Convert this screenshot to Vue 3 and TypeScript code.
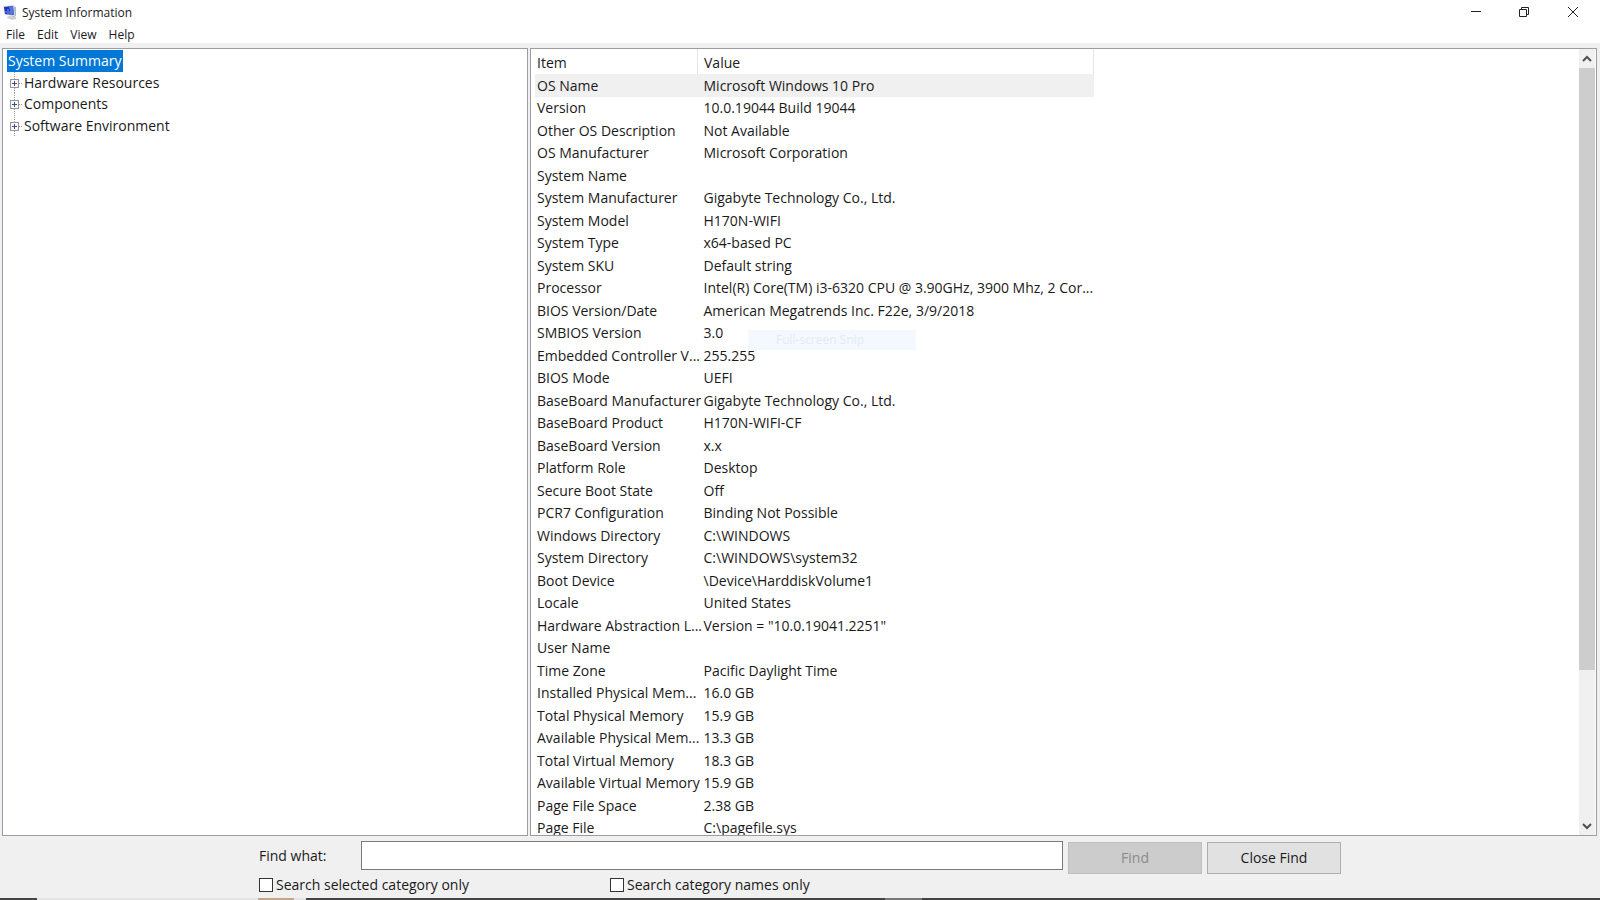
<script setup lang="ts">
import { ref } from 'vue'

interface Entry {
  item: string
  value: string
}

const menus: string[] = ['File', 'Edit', 'View', 'Help']
const categories: string[] = ['Hardware Resources', 'Components', 'Software Environment']

const entries: Entry[] = [
  { item: 'OS Name', value: 'Microsoft Windows 10 Pro' },
  { item: 'Version', value: '10.0.19044 Build 19044' },
  { item: 'Other OS Description', value: 'Not Available' },
  { item: 'OS Manufacturer', value: 'Microsoft Corporation' },
  { item: 'System Name', value: '' },
  { item: 'System Manufacturer', value: 'Gigabyte Technology Co., Ltd.' },
  { item: 'System Model', value: 'H170N-WIFI' },
  { item: 'System Type', value: 'x64-based PC' },
  { item: 'System SKU', value: 'Default string' },
  { item: 'Processor', value: 'Intel(R) Core(TM) i3-6320 CPU @ 3.90GHz, 3900 Mhz, 2 Cor...' },
  { item: 'BIOS Version/Date', value: 'American Megatrends Inc. F22e, 3/9/2018' },
  { item: 'SMBIOS Version', value: '3.0' },
  { item: 'Embedded Controller V...', value: '255.255' },
  { item: 'BIOS Mode', value: 'UEFI' },
  { item: 'BaseBoard Manufacturer', value: 'Gigabyte Technology Co., Ltd.' },
  { item: 'BaseBoard Product', value: 'H170N-WIFI-CF' },
  { item: 'BaseBoard Version', value: 'x.x' },
  { item: 'Platform Role', value: 'Desktop' },
  { item: 'Secure Boot State', value: 'Off' },
  { item: 'PCR7 Configuration', value: 'Binding Not Possible' },
  { item: 'Windows Directory', value: 'C:\\WINDOWS' },
  { item: 'System Directory', value: 'C:\\WINDOWS\\system32' },
  { item: 'Boot Device', value: '\\Device\\HarddiskVolume1' },
  { item: 'Locale', value: 'United States' },
  { item: 'Hardware Abstraction L...', value: 'Version = "10.0.19041.2251"' },
  { item: 'User Name', value: '' },
  { item: 'Time Zone', value: 'Pacific Daylight Time' },
  { item: 'Installed Physical Mem...', value: '16.0 GB' },
  { item: 'Total Physical Memory', value: '15.9 GB' },
  { item: 'Available Physical Mem...', value: '13.3 GB' },
  { item: 'Total Virtual Memory', value: '18.3 GB' },
  { item: 'Available Virtual Memory', value: '15.9 GB' },
  { item: 'Page File Space', value: '2.38 GB' },
  { item: 'Page File', value: 'C:\\pagefile.sys' },
]

const query = ref('')
const selectedOnly = ref(false)
const namesOnly = ref(false)
</script>

<template>
  <div class="window">
    <header class="titlebar">
      <svg class="app-icon" viewBox="0 0 16 16" aria-hidden="true">
        <path d="M5 13l5-2 4 2v2l-4 1-5-2z" fill="#cdd0d3" />
        <path d="M11 2l3 1v9l-3 1z" fill="#aeb6c6" />
        <path d="M1 2l11-1 1 11-10-1z" fill="#d5daea" />
        <path d="M2 3l9-1 1 9-9-1z" fill="#1d35b0" />
        <path d="M7 3l4-1 1 9-3-1z" fill="#5675dc" />
        <path d="M4 9V7m2 3V5m2 5V7" stroke="#7f9df0" fill="none" />
      </svg>
      <h1 class="title">System Information</h1>
      <div class="controls">
        <button type="button" aria-label="Minimize">
          <svg viewBox="0 0 12 12"><path d="M1 5.500h10" /></svg>
        </button>
        <button type="button" aria-label="Restore">
          <svg viewBox="0 0 12 12">
            <path d="M1.500 3.500h7v7h-7z" />
            <path d="M3.500 3v-1.500h7v7H9" />
          </svg>
        </button>
        <button type="button" aria-label="Close">
          <svg viewBox="0 0 12 12"><path d="M1 1l10 10M11 1 1 11" /></svg>
        </button>
      </div>
    </header>

    <nav class="menubar">
      <button v-for="menu in menus" :key="menu" type="button">{{ menu }}</button>
    </nav>

    <main class="panes">
      <section class="pane tree">
        <button type="button" class="root">System Summary</button>
        <ul>
          <li v-for="category in categories" :key="category">
            <svg class="expander" viewBox="0 0 17 22" aria-hidden="true">
              <path d="M7.500 0v22M12 11.500h4" stroke="#999" stroke-dasharray="1 1" />
              <rect x="3.500" y="7.500" width="8" height="8" fill="#f8f8f8" stroke="#969696" />
              <path d="M5 11.500h5M7.500 9v5" stroke="#3c4f8c" />
            </svg>
            <button type="button">{{ category }}</button>
          </li>
        </ul>
      </section>

      <section class="pane details">
        <div class="list">
          <table>
            <thead>
              <tr>
                <th scope="col" class="item">Item</th>
                <th scope="col">Value</th>
              </tr>
            </thead>
            <tbody>
              <tr v-for="(entry, index) in entries" :key="entry.item" :class="{ selected: index === 0 }">
                <td>{{ entry.item }}</td>
                <td>{{ entry.value }}</td>
              </tr>
            </tbody>
          </table>
          <div class="snip">Full-screen Snip</div>
        </div>
        <div class="scrollbar">
          <button type="button" aria-label="Scroll up">
            <svg viewBox="0 0 10 8"><path d="M1 6l4-4 4 4" /></svg>
          </button>
          <div class="track"><div class="thumb"></div></div>
          <button type="button" aria-label="Scroll down">
            <svg viewBox="0 0 10 8"><path d="M1 2l4 4 4-4" /></svg>
          </button>
        </div>
      </section>
    </main>

    <form class="find" @submit.prevent>
      <div class="find-row">
        <label class="find-label" for="query">Find what:</label>
        <input id="query" v-model="query" class="query" type="text" />
        <button type="submit" class="push" disabled>Find</button>
        <button type="button" class="push">Close Find</button>
      </div>
      <div class="options">
        <label><input v-model="selectedOnly" type="checkbox" />Search selected category only</label>
        <label><input v-model="namesOnly" type="checkbox" />Search category names only</label>
      </div>
    </form>

    <div class="taskbar">
      <span class="search"><span class="accent"></span></span>
      <span class="active"></span>
    </div>
  </div>
</template>

<style>
body {
  margin: 0;
}
</style>

<style scoped>
.window {
  display: flex;
  flex-direction: column;
  height: 100vh;
  overflow: hidden;
  background: #f0f0f0;
  color: #1a1a1a;
  font-family: "Open Sans", "Noto Sans", sans-serif;
  font-size: 14px;
  line-height: 22px;
}

button {
  margin: 0;
  padding: 0;
  border: 0;
  background: none;
  color: inherit;
  font: inherit;
}

svg {
  display: block;
  fill: none;
}

.titlebar {
  display: flex;
  align-items: center;
  flex: none;
  height: 24px;
  padding-left: 2px;
  background: #fff;
}

.app-icon {
  width: 16px;
  height: 16px;
}

.title {
  margin: 0 auto 0 4px;
  font-size: 12px;
  font-weight: 400;
  line-height: 24px;
  padding-top: 1px;
}

.controls {
  display: flex;
}

.controls button {
  display: grid;
  place-items: center;
  width: 48px;
  height: 24px;
}

.controls button:last-child {
  width: 50px;
  margin-right: 2px;
}

.controls svg {
  width: 12px;
  height: 12px;
  stroke: #222;
}

.menubar {
  display: flex;
  flex: none;
  gap: 12px;
  height: 19px;
  padding-left: 6px;
  background: #fff;
  font-size: 12px;
}

.menubar button {
  padding-top: 2px;
  line-height: 17px;
}

.panes {
  display: grid;
  grid-template-columns: 526px 1fr;
  gap: 2px;
  flex: 1;
  min-height: 0;
  padding: 5px 3px 0 2px;
}

.pane {
  min-width: 0;
  min-height: 0;
  overflow: hidden;
  border: 1px solid #9a9da6;
  background: #fff;
}

.tree {
  padding: 1px 4px;
}

.root {
  display: block;
  padding: 0 1px;
  background: #0078d7;
  color: #fff;
}

.tree ul {
  margin: 0;
  padding: 0;
  list-style: none;
}

.tree li {
  display: flex;
  align-items: center;
  height: 22px;
}

.tree li:nth-child(odd) {
  height: 21px;
}

.expander {
  width: 17px;
  height: 22px;
}

.details {
  display: flex;
}

.list {
  position: relative;
  flex: 1;
  min-width: 0;
  padding-left: 4px;
  overflow: hidden;
}

table {
  width: 559px;
  table-layout: fixed;
  border-collapse: collapse;
}

th,
td {
  height: 22px;
  padding: 0 0 0 6px;
  font-weight: 400;
  text-align: left;
  white-space: nowrap;
}

td:first-child,
th:first-child {
  padding-left: 2px;
}

th {
  height: 23px;
  padding-top: 2px;
  border-right: 1px solid #e5e5e5;
}

.item {
  width: 160px;
}

tbody tr:nth-child(odd) td {
  height: 23px;
}

.selected {
  background: #f0f0f0;
}

.snip {
  position: absolute;
  top: 281px;
  left: 217px;
  width: 140px;
  padding-left: 28px;
  background: #f3f9fe;
  color: #e6eaee;
  font-size: 12px;
  line-height: 20px;
}

.scrollbar {
  display: flex;
  flex-direction: column;
  flex: none;
  width: 16px;
  margin-right: 1px;
  background: #f0f0f0;
}

.scrollbar button {
  display: grid;
  place-items: center;
  height: 19px;
}

.scrollbar svg {
  width: 10px;
  height: 8px;
  stroke: #505050;
  stroke-width: 2;
}

.track {
  flex: 1;
}

.thumb {
  height: 80.500%;
  background: #cdcdcd;
}

.find {
  flex: none;
  box-sizing: border-box;
  width: 100%;
  max-width: 1082px;
  margin: 0 auto;
  padding: 5px 0 2px;
}

.find-row {
  display: grid;
  grid-template-columns: 102px 1fr 139px 139px;
  height: 33px;
}

.query {
  height: 29px;
  box-sizing: border-box;
  min-width: 0;
  border: 1px solid #7a7a7a;
  background: #fff;
  font: inherit;
}

.find-label {
  line-height: 29px;
}

.push {
  height: 32px;
  margin: 1px 0 0 5px;
  border: 1px solid #adadad;
  background: #e1e1e1;
}

.push:disabled {
  border-color: #bfbfbf;
  background: #ccc;
  color: #8b8b8b;
}

.options {
  display: grid;
  grid-template-columns: 351px 1fr;
}

.options label {
  display: flex;
  align-items: center;
  gap: 3px;
}

.options input {
  appearance: none;
  width: 14px;
  height: 14px;
  box-sizing: border-box;
  margin: 0;
  border: 1px solid #333;
  background: #fff;
}

.taskbar {
  display: grid;
  grid-template-columns: 269px 37px;
  column-gap: 579px;
  flex: none;
  height: 2px;
  padding-left: 37px;
  background: #444;
}

.search {
  padding-left: 221px;
  background: #e4e4e4;
}

.accent {
  display: block;
  width: 36px;
  height: 2px;
  background: #c9a58a;
}

.active {
  background: #777;
}
</style>
